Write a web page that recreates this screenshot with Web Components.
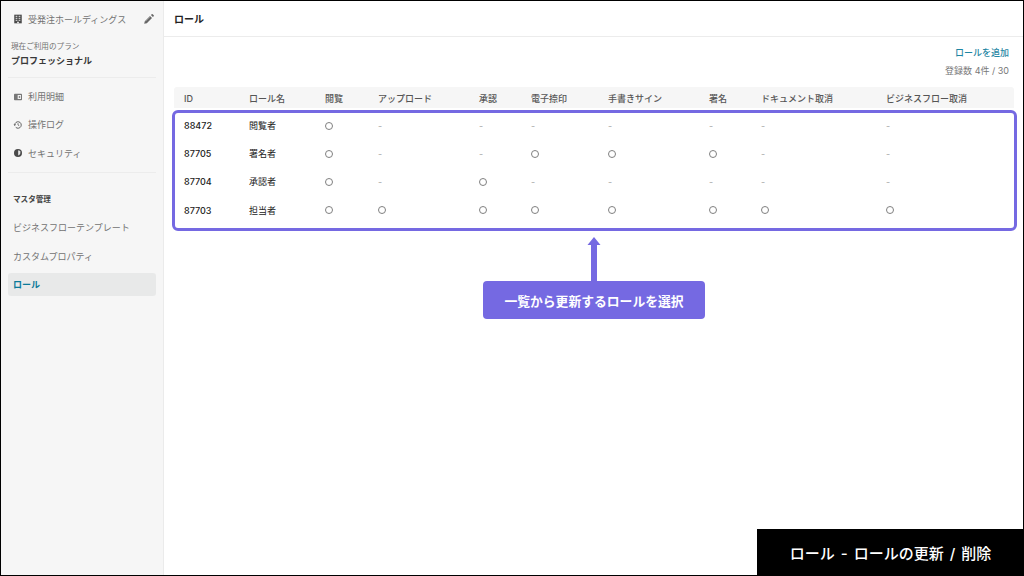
<!DOCTYPE html>
<html lang="ja">
<head>
<meta charset="utf-8">
<title>ロール</title>
<style>
  html, body { margin: 0; height: 100%; }
  body { font-family: Inter, "Noto Sans CJK JP", sans-serif; background: #000; overflow: hidden; }
</style>
</head>
<body>
<app-shell>
  <side-nav slot="side"></side-nav>
  <top-bar slot="main">ロール</top-bar>
  <role-page slot="main"></role-page>
  <page-caption slot="caption">ロール - ロールの更新 / 削除</page-caption>
</app-shell>

<script>
const ICONS = {
  building: '<path d="M1.5 .8h9v10.4h-9z" fill="#4a4a4a"/><path d="M3.2 2.2h2v1.4h-2zM6.8 2.2h2v1.4h-2zM3.2 4.6h2v1.4h-2zM6.8 4.6h2v1.4h-2zM3.2 7h2v1.4h-2zM6.8 7h2v1.4h-2z" fill="#c9c9c9"/><path d="M5 9.2h2v2H5z" fill="#f6f6f6"/>',
  pencil: '<path d="M1.2 10.8l.6-2.6 5.2-5.2 2 2-5.2 5.2zM7.9 2.1l.8-.8a.7.7 0 0 1 1 0l1 1a.7.7 0 0 1 0 1l-.8.8z" fill="#666"/><path d="M2.6 8.4l5-5" stroke="#bbb" stroke-width=".5"/>',
  bill: '<rect x="1.2" y="2" width="9.6" height="8" rx="1" fill="#777"/><rect x="5.6" y="3.6" width="4" height="4.8" fill="#f0f0f0"/><rect x="7" y="5.2" width="1.6" height="1.6" fill="#555"/>',
  history: '<path d="M2.1 6a3.9 3.9 0 1 1 1.2 2.8" fill="none" stroke="#555" stroke-width="1.1"/><path d="M.6 5.3h3L2.1 7.3z" fill="#555"/><path d="M6 3.8V6l1.5.9" fill="none" stroke="#555" stroke-width=".9"/>',
  shield: '<circle cx="6" cy="6" r="4.8" fill="#4a4a4a"/><path d="M6.2 2.6l2.6 1v2.1c0 1.6-1 2.7-2.6 3.4z" fill="#e6e6e6"/>'
};

class AppShell extends HTMLElement {
  constructor() {
    super();
    this.attachShadow({ mode: 'open' }).innerHTML = `
      <style>
        :host { display: block; box-sizing: border-box; height: 576px; padding: 1px; position: relative; }
        .frame { display: flex; height: 100%; background: #fff; }
        .main { flex: 1; min-width: 0; display: flex; flex-direction: column; }
        .caption { position: absolute; right: 0; bottom: 0; }
      </style>
      <div class="frame">
        <slot name="side"></slot>
        <div class="main"><slot name="main"></slot></div>
      </div>
      <div class="caption"><slot name="caption"></slot></div>`;
  }
}

class SideNav extends HTMLElement {
  constructor() {
    super();
    const icon = n => `<svg viewBox="0 0 12 12" width="10" height="10">${ICONS[n]}</svg>`;
    this.attachShadow({ mode: 'open' }).innerHTML = `
      <style>
        :host { display: block; box-sizing: border-box; width: 163px; height: 100%; background: #f6f6f6; border-right: 1px solid #ebebeb; padding: 0 7px; font-size: 9px; color: #727272; }
        .org { display: flex; align-items: center; height: 36px; padding: 0 5px; gap: 5px; }
        .org span { flex: 1; }
        .org .edit { width: 12px; height: 12px; margin-right: -4px; }
        .plan { padding: 4px 3px 10px; border-bottom: 1px solid #ececec; }
        .plan small { display: block; font-size: 7.6px; line-height: 12px; }
        .plan b { display: block; margin-top: 2px; line-height: 12px; color: #383838; font-weight: 700; }
        .group { padding: 7px 0 2px; }
        .group.first { border-bottom: 1px solid #ececec; }
        .head { font-size: 7.6px; font-weight: 700; color: #444; padding: 21px 5px 10px; line-height: 12px; }
      </style>
      <div class="org">${icon('building')}<span>受発注ホールディングス</span><svg class="edit" viewBox="0 0 12 12">${ICONS.pencil}</svg></div>
      <div class="plan"><small>現在ご利用のプラン</small><b>プロフェッショナル</b></div>
      <div class="group first">
        <nav-item>${icon('bill')}<span>利用明細</span></nav-item>
        <nav-item>${icon('history')}<span>操作ログ</span></nav-item>
        <nav-item>${icon('shield')}<span>セキュリティ</span></nav-item>
      </div>
      <div class="head">マスタ管理</div>
      <nav-item>ビジネスフローテンプレート</nav-item>
      <nav-item>カスタムプロパティ</nav-item>
      <nav-item active>ロール</nav-item>`;
  }
}

class NavItem extends HTMLElement {
  constructor() {
    super();
    this.attachShadow({ mode: 'open' }).innerHTML = `
      <style>
        :host { display: flex; align-items: center; gap: 5px; height: 23px; margin-bottom: 5.4px; padding: 0 5px; border-radius: 3px; }
        :host([active]) { background: #e8e9e9; color: #0b7a99; font-weight: 700; }
        ::slotted(svg) { flex: none; }
      </style>
      <slot></slot>`;
  }
}

class TopBar extends HTMLElement {
  constructor() {
    super();
    this.attachShadow({ mode: 'open' }).innerHTML = `
      <style>
        :host { display: flex; align-items: center; box-sizing: border-box; height: 36px; flex: none; padding: 0 10px; border-bottom: 1px solid #ececec; font-size: 10px; font-weight: 700; color: #222; }
      </style>
      <slot></slot>`;
  }
}

class RolePage extends HTMLElement {
  constructor() {
    super();
    this.attachShadow({ mode: 'open' }).innerHTML = `
      <style>
        :host { display: block; padding: 10px 9px 0 10px; }
        .meta { text-align: right; font-size: 9px; line-height: 12px; padding-right: 5px; }
        .add { color: #1f86a3; font-weight: 500; }
        .count { color: #777; margin-top: 6px; }
        role-table { margin-top: 10px; }
      </style>
      <div class="meta"><div class="add">ロールを追加</div><div class="count">登録数 4件 / 30</div></div>
      <role-table></role-table>
      <call-out>一覧から更新するロールを選択</call-out>`;
  }
}

const COLS = ['ID', 'ロール名', '閲覧', 'アップロード', '承認', '電子捺印', '手書きサイン', '署名', 'ドキュメント取消', 'ビジネスフロー取消'];
const ROWS = [
  ['88472', '閲覧者', 1, 0, 0, 0, 0, 0, 0, 0],
  ['87705', '署名者', 1, 0, 0, 1, 1, 1, 0, 0],
  ['87704', '承認者', 1, 0, 1, 0, 0, 0, 0, 0],
  ['87703', '担当者', 1, 1, 1, 1, 1, 1, 1, 1]
];

class RoleTable extends HTMLElement {
  constructor() {
    super();
    const cell = (v, i) => v === 1 ? '<i class="yes"></i>' : v === 0 ? '<span class="no">-</span>' : `<span class="${i ? 'name' : ''}">${v}</span>`;
    this.attachShadow({ mode: 'open' }).innerHTML = `
      <style>
        :host { display: block; position: relative; font-size: 9px; }
        .row { display: grid; grid-template-columns: 65px 76px 53px 101px 52px 77px 101px 52px 125px 1fr; padding-left: 10px; align-items: center; height: 28.2px; color: #222; font-weight: 500; }
        .head { box-sizing: border-box; height: 21px; padding-top: 2px; margin-bottom: 3.5px; background: #f6f6f6; border-radius: 3px 3px 0 0; color: #555; }
        .name { font-weight: 400; }
        .yes { display: block; box-sizing: border-box; width: 8px; height: 8px; border: 1px solid #808080; border-radius: 50%; }
        .no { color: #aaa; font-weight: 400; }
        .mark { position: absolute; left: -2px; right: -3px; top: 23px; height: 121px; box-sizing: border-box; border: 3px solid #7569e2; border-radius: 6px; }
      </style>
      <div class="row head">${COLS.map(c => `<span>${c}</span>`).join('')}</div>
      ${ROWS.map(r => `<div class="row">${r.map(cell).join('')}</div>`).join('')}
      <div class="mark"></div>`;
  }
}

class CallOut extends HTMLElement {
  constructor() {
    super();
    this.attachShadow({ mode: 'open' }).innerHTML = `
      <style>
        :host { display: flex; flex-direction: column; align-items: center; margin-top: 13px; }
        svg { display: block; }
        .box { box-sizing: border-box; width: 222px; height: 38px; display: flex; align-items: center; justify-content: center; background: #7569e2; border-radius: 4px; color: #fff; font-size: 12.8px; font-weight: 700; }
      </style>
      <svg width="14" height="44" viewBox="0 0 14 44"><path d="M7 0l6.5 8H10v36H4V8H.5z" fill="#7569e2"/></svg>
      <div class="box"><slot></slot></div>`;
  }
}

class PageCaption extends HTMLElement {
  constructor() {
    super();
    this.attachShadow({ mode: 'open' }).innerHTML = `
      <style>
        :host { display: flex; align-items: center; justify-content: center; box-sizing: border-box; width: 267px; height: 47px; background: #000; color: #fff; font-size: 15px; font-weight: 500; word-spacing: 2px; }
      </style>
      <slot></slot>`;
  }
}

customElements.define('app-shell', AppShell);
customElements.define('side-nav', SideNav);
customElements.define('nav-item', NavItem);
customElements.define('top-bar', TopBar);
customElements.define('role-page', RolePage);
customElements.define('role-table', RoleTable);
customElements.define('call-out', CallOut);
customElements.define('page-caption', PageCaption);
</script>
</body>
</html>
